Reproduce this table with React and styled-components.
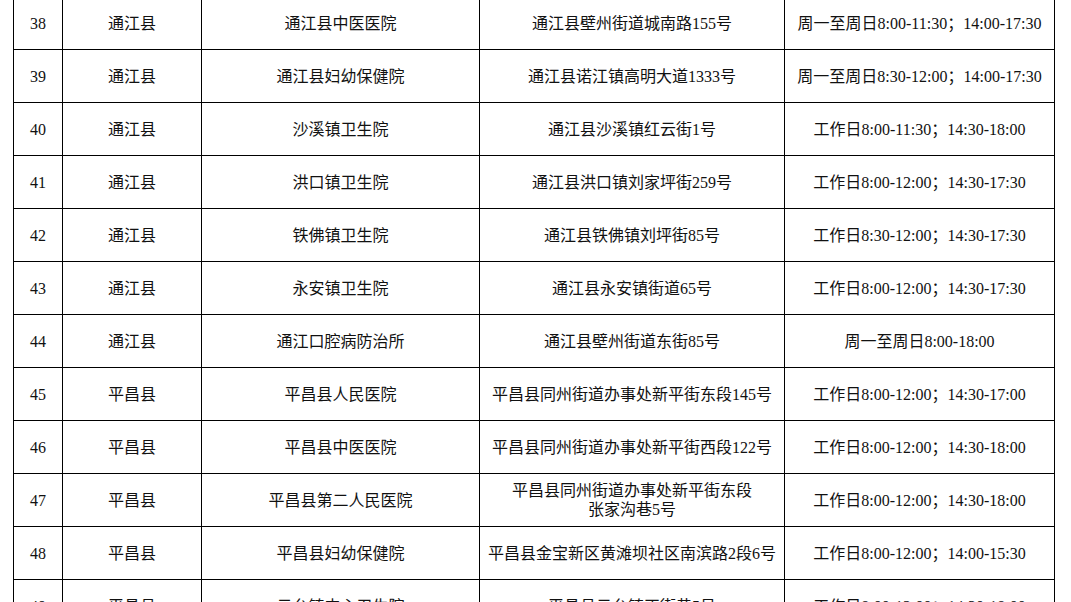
import styled, { createGlobalStyle } from "styled-components";

const rows = [
  ["38", "通江县", "通江县中医医院", "通江县壁州街道城南路155号", "周一至周日8:00-11:30；14:00-17:30"],
  ["39", "通江县", "通江县妇幼保健院", "通江县诺江镇高明大道1333号", "周一至周日8:30-12:00；14:00-17:30"],
  ["40", "通江县", "沙溪镇卫生院", "通江县沙溪镇红云街1号", "工作日8:00-11:30；14:30-18:00"],
  ["41", "通江县", "洪口镇卫生院", "通江县洪口镇刘家坪街259号", "工作日8:00-12:00；14:30-17:30"],
  ["42", "通江县", "铁佛镇卫生院", "通江县铁佛镇刘坪街85号", "工作日8:30-12:00；14:30-17:30"],
  ["43", "通江县", "永安镇卫生院", "通江县永安镇街道65号", "工作日8:00-12:00；14:30-17:30"],
  ["44", "通江县", "通江口腔病防治所", "通江县壁州街道东街85号", "周一至周日8:00-18:00"],
  ["45", "平昌县", "平昌县人民医院", "平昌县同州街道办事处新平街东段145号", "工作日8:00-12:00；14:30-17:00"],
  ["46", "平昌县", "平昌县中医医院", "平昌县同州街道办事处新平街西段122号", "工作日8:00-12:00；14:30-18:00"],
  ["47", "平昌县", "平昌县第二人民医院", ["平昌县同州街道办事处新平街东段", "张家沟巷5号"], "工作日8:00-12:00；14:30-18:00"],
  ["48", "平昌县", "平昌县妇幼保健院", "平昌县金宝新区黄滩坝社区南滨路2段6号", "工作日8:00-12:00；14:00-15:30"],
  ["49", "平昌县", "云台镇中心卫生院", "平昌县云台镇正街巷5号", "工作日8:00-12:00；14:30-18:00"],
];

const widths = [49, 139, 278, 305, 270];

export default function App() {
  return (
    <Page>
      <GlobalStyle />
      <Table>
        <colgroup>
          {widths.map((w, i) => (
            <col key={i} style={{ width: w }} />
          ))}
        </colgroup>
        <tbody>
          {rows.map((r) => (
            <Row key={r[0]}>
              {r.map((c, i) => (
                <Cell key={i}>
                  {Array.isArray(c)
                    ? c.map((line, j) => <Line key={j}>{line}</Line>)
                    : c}
                </Cell>
              ))}
            </Row>
          ))}
        </tbody>
      </Table>
    </Page>
  );
}

const GlobalStyle = createGlobalStyle`
  * {
    margin: 0;
    padding: 0;
    box-sizing: border-box;
  }
  body {
    background: #ffffff;
    overflow: hidden;
  }
`;

const Page = styled.div`
  width: 1071px;
  height: 602px;
  overflow: hidden;
  padding: 0 0 0 13px;
  background: #fff;
`;

const Table = styled.table`
  margin-top: -4px;
  border-collapse: collapse;
  table-layout: fixed;
  width: 1042px;
  font-family: "Liberation Serif", "Noto Sans CJK SC", serif;
  font-size: 16px;
  color: #111;
`;

const Row = styled.tr`
  height: 53px;
`;

const Cell = styled.td`
  border: 1px solid #000;
  text-align: center;
  vertical-align: middle;
  padding: 0 2px;
  line-height: 19px;
  white-space: nowrap;
`;

const Line = styled.div`
  line-height: 19px;
`;
